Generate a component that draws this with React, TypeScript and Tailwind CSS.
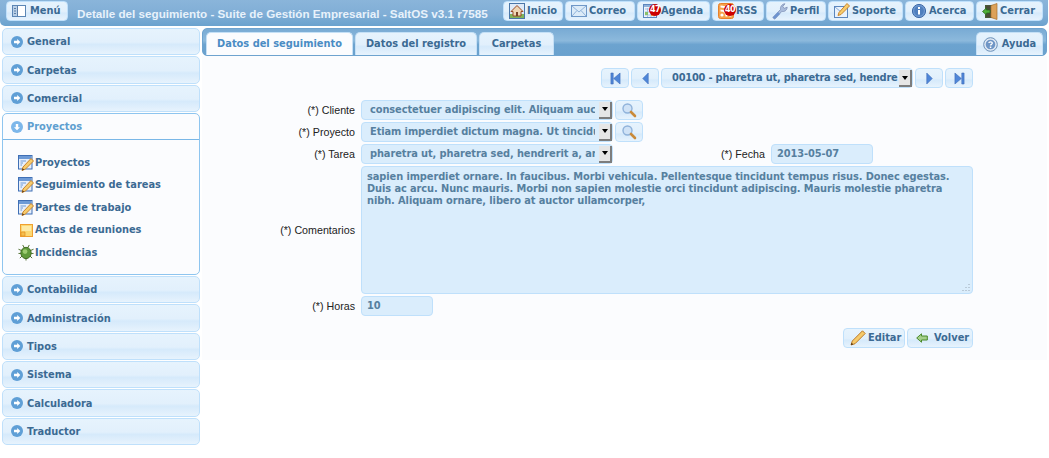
import type { ReactNode } from "react"

const glass = "bg-[linear-gradient(#e6f3fd_0%,#e2f0fc_52%,#d6eafb_62%,#e0effc_85%,#e7f3fd_100%)]"
const bold = "font-['DejaVu_Sans'] font-bold text-[9.85px] text-[#3b6a93]"
const edge = "border border-[#bfe0fb]"

const IconHouse = () => (
  <svg width="16" height="16" viewBox="0 0 16 16">
    <rect x="0.5" y="0.5" width="15" height="15" fill="#dfeaf7" stroke="#4a76a8" />
    <rect x="1" y="11" width="14" height="4" fill="#7fb35a" />
    <path d="M8 2.5L2 8.5H4V13H12V8.5H14Z" fill="#efd6b4" stroke="#9a4a26" />
    <rect x="7" y="9" width="2" height="4" fill="#7a4426" />
  </svg>
)
const IconMail = () => (
  <svg width="16" height="16" viewBox="0 0 16 16">
    <rect x="0.5" y="2.5" width="15" height="11" fill="#dcebf8" stroke="#6f98c8" />
    <path d="M1 3L8 9L15 3M1 13L6 7.5M15 13L10 7.5" fill="none" stroke="#8fb2da" />
  </svg>
)
const IconAgenda = () => (
  <svg width="16" height="16" viewBox="0 0 16 16">
    <rect x="0.5" y="1.5" width="13" height="13" fill="#eef4fb" stroke="#5c86bd" />
    <rect x="1" y="2" width="12" height="2" fill="#8fb2da" />
    <path d="M2 6H12M2 9H12M2 12H12M4.5 5V14M8 5V14M11 5V14" stroke="#a9c3e2" />
    <rect x="2" y="9" width="3" height="3" fill="#8ac06a" />
    <rect x="8" y="10" width="3" height="3" fill="#e8a14a" />
  </svg>
)
const IconRss = () => (
  <svg width="16" height="16" viewBox="0 0 16 16">
    <rect x="0.5" y="0.5" width="15" height="15" rx="2" fill="#f7a24a" stroke="#e8802a" />
    <circle cx="4" cy="12" r="1.6" fill="#fff" />
    <path d="M2.5 7.5C6 7.5 8.5 10 8.5 13.5M2.5 3.5C8.5 3.5 12.5 7.5 12.5 13.5" fill="none" stroke="#fff" strokeWidth="2" />
  </svg>
)
const IconDocPencil = () => (
  <svg width="16" height="16" viewBox="0 0 16 16">
    <rect x="0.5" y="0.5" width="13.5" height="13.5" fill="#e6eefa" stroke="#3f6fb5" />
    <rect x="1" y="1" width="12.5" height="3" fill="#6d9ad6" />
    <path d="M2.5 6H8M2.5 8H5M2.5 10H4" stroke="#6f9ad6" />
    <path d="M13 3.5L15.5 6L7.5 14L4 15.5L5 12Z" fill="#f7cc6c" stroke="#c9842c" />
    <path d="M4 15.5L4.6 13.2L6.3 14.8Z" fill="#5a3a18" />
  </svg>
)
const IconNote = () => (
  <svg width="13" height="13" viewBox="0 0 13 13">
    <rect x="0.5" y="0.5" width="12" height="12" fill="#fbd873" stroke="#f0a030" />
    <rect x="2" y="2" width="9" height="5" fill="#fdeaa6" />
    <path d="M1 12V8H5V12Z" fill="#f6be4c" stroke="#e09020" strokeWidth="0.7" />
  </svg>
)
const IconBug = () => (
  <svg width="17" height="17" viewBox="0 0 17 17">
    <path d="M0.5 5L5 7M0.5 9.5H4M2 14.5L5 11.5M16.5 5L12 7M16.5 9.5H13M15 14.5L12 11.5M5 0.5L7 4M12 0.5L10 4M8.5 14V17" stroke="#4a6a28" fill="none" />
    <ellipse cx="8.5" cy="9" rx="5.5" ry="6" fill="#5f9a3a" stroke="#3f6a20" />
    <ellipse cx="7.5" cy="7.5" rx="2.5" ry="2.5" fill="#9ccb70" />
  </svg>
)
const IconWrench = () => (
  <svg width="16" height="17" viewBox="0 0 16 17">
    <path d="M2.5 16L0.8 14.5L8.5 6.5C8 4 10 0.8 13 0.8L10.8 3.4L12.2 5.4L15.2 4.2C15 7.4 12.2 9.2 9.8 8.3L3.5 15.5Z" fill="#a9bcdc" stroke="#7d8fb5" strokeWidth="0.8" />
    <path d="M2.5 16L0.8 14.5L6 9L8 11Z" fill="#6d93d0" />
  </svg>
)
const IconSoporte = () => (
  <svg width="16" height="16" viewBox="0 0 16 16">
    <rect x="0.5" y="3.5" width="13" height="11" fill="#eaf2fb" stroke="#5c86bd" />
    <path d="M1 4L7 9L13 4" fill="none" stroke="#8cadd8" />
    <path d="M13 0.5L15.5 3L7 11.5L4 12.5L5 9.5Z" fill="#f7cc6c" stroke="#c9842c" />
  </svg>
)
const IconInfo = () => (
  <svg width="16" height="16" viewBox="0 0 16 16">
    <circle cx="8" cy="8" r="6.6" fill="#6d98d0" stroke="#3f6aa8" />
    <circle cx="8" cy="8" r="4.8" fill="#4f7fbe" />
    <rect x="7" y="7" width="2" height="4.5" fill="#fff" />
    <rect x="7" y="4" width="2" height="2" fill="#fff" />
  </svg>
)
const IconDoor = () => (
  <svg width="16" height="17" viewBox="0 0 16 17">
    <rect x="3.5" y="2.5" width="10" height="12" fill="#4a4a38" stroke="#4a5a38" />
    <path d="M9 2.5L15 0.5V16.5L9 14.5Z" fill="#dca25a" stroke="#a8702e" strokeWidth="0.7" />
    <path d="M0.5 8.5L4.5 5V7H8V10H4.5V12Z" fill="#4fb03a" stroke="#2a6a20" strokeWidth="0.8" />
  </svg>
)
const IconHelp = () => (
  <svg width="15" height="15" viewBox="0 0 15 15">
    <circle cx="7.5" cy="7.5" r="6.8" fill="#dfe8f3" stroke="#6a8fb8" />
    <circle cx="7.5" cy="7.5" r="4.8" fill="#6f96c6" />
    <path d="M5.8 6C6 4.4 9.4 4.4 9.3 6.2C9.2 7.4 7.5 7.3 7.5 8.6" fill="none" stroke="#fff" strokeWidth="1.3" />
    <rect x="6.8" y="9.5" width="1.5" height="1.5" fill="#fff" />
  </svg>
)
const IconSearch = () => (
  <svg width="16" height="16" viewBox="0 0 16 16">
    <circle cx="6.5" cy="6.5" r="4.5" fill="#cfe2f6" stroke="#8fb2da" strokeWidth="1.4" />
    <path d="M10 10L14 14" stroke="#c98a3a" strokeWidth="2.6" strokeLinecap="round" />
  </svg>
)
const IconPencil = () => (
  <svg width="16" height="16" viewBox="0 0 16 16">
    <path d="M12.5 0.8L15.2 3.5L5 13.7L1 15L2.3 11Z" fill="#f6ca6a" stroke="#bb7a2a" />
    <path d="M1 15L1.7 12.8L3.2 14.3Z" fill="#3a2410" />
  </svg>
)
const IconBack = () => (
  <svg width="12" height="10" viewBox="0 0 12 10">
    <path d="M0.7 5L5.5 0.8V3H11.3V7H5.5V9.2Z" fill="#a5cf8a" stroke="#4a8a2a" />
  </svg>
)
const IconMenu = () => (
  <svg width="14" height="12" viewBox="0 0 14 12">
    <rect x="0.5" y="0.5" width="13" height="11" fill="#fff" stroke="#5b86b5" />
    <rect x="1" y="1" width="4" height="10" fill="#b9cfe6" />
    <path d="M5.5 1V11M2 3.5H4M2 6H4M2 8.5H4" stroke="#5b7fa8" />
  </svg>
)
const CircleArrow = ({ down }: { down?: boolean }) => (
  <svg width="12" height="12" viewBox="0 0 12 12">
    <circle cx="6" cy="6" r="6" fill={down ? "#7db7ea" : "#5f9fd6"} />
    {down ? (
      <path d="M6 9.3L3 6.2H4.8V3H7.2V6.2H9Z" fill="#fff" />
    ) : (
      <path d="M9.3 6L6.2 3V4.8H3V7.2H6.2V9Z" fill="#fff" />
    )}
  </svg>
)

const Badge = ({ n }: { n: string }) => (
  <span className="absolute top-[2px] left-[11px] flex h-[12px] w-[12px] items-center justify-center rounded-full bg-[#cc0000] font-['DejaVu_Sans'] text-[8px] font-bold tracking-[-0.5px] text-white">
    {n}
  </span>
)

const TopBtn = ({ w, icon, label, badge }: { w: string; icon: ReactNode; label: string; badge?: string }) => (
  <div className={`relative flex h-[20px] items-center gap-[2px] rounded-[4px] ${edge} pl-[5px] ${glass} ${bold} ${w}`}>
    {icon}
    {badge && <Badge n={badge} />}
    <span className="pt-px">{label}</span>
  </div>
)

const Accordion = ({ label }: { label: string }) => (
  <div className={`flex h-[27.33px] items-center gap-[4px] rounded-[5px] ${edge} pl-[8px] ${glass} ${bold}`}>
    <CircleArrow />
    <span className="pt-[2px]">{label}</span>
  </div>
)

const SubItem = ({ icon, label }: { icon: ReactNode; label: string }) => (
  <div className={`flex h-[22.5px] items-center ${bold}`}>
    <div className="flex w-[16px] justify-center">{icon}</div>
    <span className="ml-px pt-px">{label}</span>
  </div>
)

const Label = ({ children, w = "w-[153px]" }: { children: string; w?: string }) => (
  <div className={`${w} shrink-0 text-right font-['Liberation_Sans'] text-[10.7px] text-[#222222]`}>{children}</div>
)

const field = `rounded-[4px] ${edge} bg-[#daedfc] font-['DejaVu_Sans'] text-[9.85px] font-bold tracking-[-0.09px] text-[#56809f]`

const Arrow = () => (
  <div className="flex h-[17px] w-[13px] items-center justify-center border-r-2 border-b-2 border-[#7d7d7d] bg-[#e6e6e6]">
    <div className="h-0 w-0 border-x-[3.5px] border-t-[4px] border-x-transparent border-t-black" />
  </div>
)

const Select = ({ text }: { text: string }) => (
  <div className={`flex h-[19.8px] w-[252px] shrink-0 items-end pl-[8px] ${field}`}>
    <div className="h-[18px] w-[225px] overflow-hidden leading-[18px] whitespace-nowrap">{text}</div>
    <div className="ml-auto">
      <Arrow />
    </div>
  </div>
)

const SearchBtn = () => (
  <div className={`ml-[-4px] flex h-[19.8px] w-[28px] items-center justify-center rounded-[4px] ${edge} ${glass}`}>
    <IconSearch />
  </div>
)

const NavBtn = ({ d }: { d: string }) => (
  <div className={`flex h-[20px] w-[28px] items-center justify-center rounded-[4px] ${edge} ${glass}`}>
    <svg width="11" height="13" viewBox="0 0 12 14">
      <path d={d} fill="#4f86d8" stroke="#3a68b5" strokeWidth="0.6" />
    </svg>
  </div>
)

const Tab = ({ label, active, w }: { label: string; active?: boolean; w: string }) => (
  <div
    className={`flex h-[23px] items-center justify-center rounded-t-[5px] border border-b-0 border-[#c5e0f6] pt-px font-['DejaVu_Sans'] text-[9.85px] font-bold ${w} ${
      active ? "bg-[#fbfcfe] text-[#4a8cc4]" : `${glass} text-[#3b6a93]`
    }`}
  >
    {label}
  </div>
)

export default function App() {
  return (
    <div className="h-[458px] w-[1049px] overflow-hidden bg-white">
      {/* barra superior */}
      <header className="flex h-[25.5px] w-[1048px] items-start rounded-b-[5px] bg-[linear-gradient(#8ab5da_0%,#80aed6_55%,#6aa2ce_100%)] pl-[6px] pt-px">
        <div className={`flex h-[20px] w-[62px] items-center gap-[4px] rounded-[4px] ${edge} pl-[5px] ${glass} ${bold}`}>
          <IconMenu />
          <span className="pt-px">Menú</span>
        </div>
        <div className="ml-[9px] mt-[4px] w-[426px] font-['Liberation_Sans'] text-[11.66px] font-bold whitespace-nowrap text-[#e8f2fb]">
          Detalle del seguimiento - Suite de Gestión Empresarial - SaltOS v3.1 r7585
        </div>
        <div className="flex gap-[2px]">
          <TopBtn w="w-[60px]" icon={<IconHouse />} label="Inicio" />
          <TopBtn w="w-[70px]" icon={<IconMail />} label="Correo" />
          <TopBtn w="w-[73px]" icon={<IconAgenda />} label="Agenda" badge="47" />
          <TopBtn w="w-[52px]" icon={<IconRss />} label="RSS" badge="40" />
          <TopBtn w="w-[60px]" icon={<IconWrench />} label="Perfil" />
          <TopBtn w="w-[75px]" icon={<IconSoporte />} label="Soporte" />
          <TopBtn w="w-[69px]" icon={<IconInfo />} label="Acerca" />
          <TopBtn w="w-[67px]" icon={<IconDoor />} label="Cerrar" />
        </div>
      </header>

      <div className="flex gap-[2px] pl-[2px] pt-[2.5px]">
        {/* menú lateral */}
        <aside className="flex w-[198px] flex-col gap-px">
          <Accordion label="General" />
          <Accordion label="Carpetas" />
          <Accordion label="Comercial" />
          <div className="h-[162px] rounded-[5px] border border-[#8ec5ef] bg-[#fbfcfe]">
            <div className="flex h-[26.5px] items-center gap-[4px] border-b border-[#79b7e7] pl-[8px] font-['DejaVu_Sans'] text-[9.85px] font-bold text-[#5f9fd0]">
              <CircleArrow down />
              <span className="pt-[2px]">Proyectos</span>
            </div>
            <div className="pl-[15px] pt-[11px]">
              <SubItem icon={<IconDocPencil />} label="Proyectos" />
              <SubItem icon={<IconDocPencil />} label="Seguimiento de tareas" />
              <SubItem icon={<IconDocPencil />} label="Partes de trabajo" />
              <SubItem icon={<IconNote />} label="Actas de reuniones" />
              <SubItem icon={<IconBug />} label="Incidencias" />
            </div>
          </div>
          <Accordion label="Contabilidad" />
          <Accordion label="Administración" />
          <Accordion label="Tipos" />
          <Accordion label="Sistema" />
          <Accordion label="Calculadora" />
          <Accordion label="Traductor" />
        </aside>

        {/* contenido */}
        <main className="w-[845px]">
          <div className="flex h-[28px] items-end rounded-[5px] border border-[#6ea3cf] bg-[linear-gradient(#79abd4_0%,#8cb9dc_45%,#6ca3cf_60%,#6aa1ce_100%)] px-[3px]">
            <div className="flex gap-[2px]">
              <Tab active w="w-[147px]" label="Datos del seguimiento" />
              <Tab w="w-[122px]" label="Datos del registro" />
              <Tab w="w-[75px]" label="Carpetas" />
            </div>
            <div className={`ml-auto flex h-[23px] w-[67px] items-center justify-center gap-[4px] rounded-t-[5px] border border-b-0 border-[#c5e0f6] ${glass} ${bold}`}>
              <IconHelp />
              <span>Ayuda</span>
            </div>
          </div>

          <div className="h-[304px] bg-[#fbfcfe] pt-[12px]">
            {/* navegación */}
            <div className="flex justify-end gap-[2px] pr-[74px]">
              <NavBtn d="M1 1H3.5V13H1ZM11 1V13L4 7Z" />
              <NavBtn d="M9 1V13L3 7Z" />
              <div className={`flex h-[20px] w-[252px] items-end rounded-[4px] ${edge} pl-[10px] ${glass} ${bold}`}>
                <span className="h-[18px] w-[226px] overflow-hidden leading-[18px] tracking-[-0.2px] whitespace-nowrap">00100 - pharetra ut, pharetra sed, hendre</span>
                <div className="ml-auto">
                  <Arrow />
                </div>
              </div>
              <NavBtn d="M3 1V13L9 7Z" />
              <NavBtn d="M1 1V13L8 7ZM8.5 1H11V13H8.5Z" />
            </div>

            {/* formulario */}
            <div className="mt-[12px] flex flex-col gap-[2.3px]">
              <div className="flex items-center gap-[6px]">
                <Label>(*) Cliente</Label>
                <Select text="consectetuer adipiscing elit. Aliquam auctor" />
                <SearchBtn />
              </div>
              <div className="flex items-center gap-[6px]">
                <Label>(*) Proyecto</Label>
                <Select text="Etiam imperdiet dictum magna. Ut tincidunt" />
                <SearchBtn />
              </div>
              <div className="flex items-center gap-[6px]">
                <Label>(*) Tarea</Label>
                <Select text="pharetra ut, pharetra sed, hendrerit a, arcu" />
                <Label w="w-[146px]">(*) Fecha</Label>
                <div className={`flex h-[19.8px] w-[102px] items-center pl-[5px] pt-px ${field}`}>2013-05-07</div>
              </div>
              <div className="flex items-center gap-[6px]">
                <Label>(*) Comentarios</Label>
                <div className={`relative h-[127.5px] w-[612px] px-[5px] pt-[3.5px] leading-[12px] ${field}`}>
                  sapien imperdiet ornare. In faucibus. Morbi vehicula. Pellentesque tincidunt tempus risus. Donec egestas. Duis ac arcu. Nunc mauris. Morbi non sapien molestie orci tincidunt adipiscing. Mauris molestie pharetra nibh. Aliquam ornare, libero at auctor ullamcorper,
                  <svg className="absolute right-px bottom-px" width="10" height="10" viewBox="0 0 10 10">
                    <path d="M8 2V3M5 5V6M8 5V6M2 8V9M5 8V9M8 8V9" stroke="#9aa8b5" />
                  </svg>
                </div>
              </div>
              <div className="flex items-center gap-[6px]">
                <Label>(*) Horas</Label>
                <div className={`flex h-[19.8px] w-[72px] items-center pl-[5px] pt-px ${field}`}>10</div>
              </div>
            </div>

            <div className="mt-[12px] flex justify-end gap-[2px] pr-[74px]">
              <div className={`flex h-[20px] w-[62px] items-center gap-[2px] rounded-[4px] ${edge} pl-[6px] ${glass} ${bold}`}>
                <IconPencil />
                <span className="pt-px">Editar</span>
              </div>
              <div className={`flex h-[20px] w-[66px] items-center gap-[6px] rounded-[4px] ${edge} pl-[8px] ${glass} ${bold}`}>
                <IconBack />
                <span className="pt-px">Volver</span>
              </div>
            </div>
          </div>
        </main>
      </div>
    </div>
  )
}
